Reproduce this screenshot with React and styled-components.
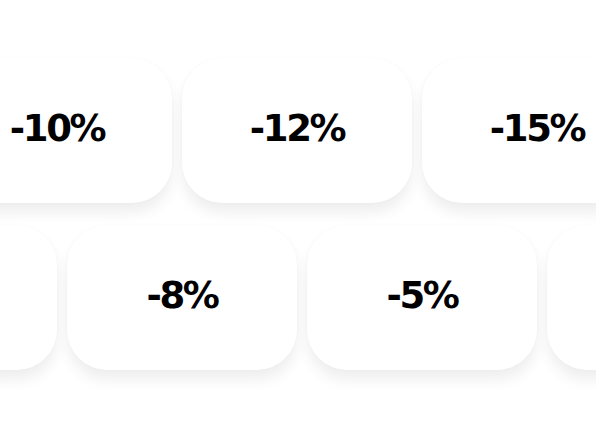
import React from "react";
import styled, { createGlobalStyle } from "styled-components";

const GlobalStyle = createGlobalStyle`
  html, body {
    margin: 0;
    padding: 0;
    background: #ffffff;
  }
`;

const Frame = styled.div`
  width: 596px;
  height: 440px;
  box-sizing: border-box;
  background: #ffffff;
  border-radius: 22px;
  overflow: hidden;
  display: flex;
  flex-direction: column;
  gap: 22px;
  padding-top: 58px;
`;

const Row = styled.div`
  display: flex;
  gap: 10px;
  margin-left: ${(p) => p.$offset}px;
`;

const Card = styled.div`
  flex: 0 0 230px;
  height: 145px;
  border-radius: 40px;
  background: #ffffff;
  box-shadow: 0 10px 14px rgba(0, 0, 0, 0.065), 0 0 3px rgba(0, 0, 0, 0.03);
  display: flex;
  align-items: center;
  justify-content: center;
`;

const Value = styled.span`
  font-family: "DejaVu Sans", "Liberation Sans", sans-serif;
  font-weight: 700;
  font-size: 37px;
  letter-spacing: -2.4px;
  line-height: 1;
  margin-top: -4px;
  color: #000000;
`;

// off-screen cards keep no label: only their edges show in the strip
const rows = [
  { offset: -58, items: ["-10%", "-12%", "-15%"] },
  { offset: -173, items: ["", "-8%", "-5%", ""] },
];

export default function App() {
  return (
    <>
      <GlobalStyle />
      <Frame>
        {rows.map((row, i) => (
          <Row key={i} $offset={row.offset}>
            {row.items.map((v, j) => (
              <Card key={j}>{v && <Value>{v}</Value>}</Card>
            ))}
          </Row>
        ))}
      </Frame>
    </>
  );
}
